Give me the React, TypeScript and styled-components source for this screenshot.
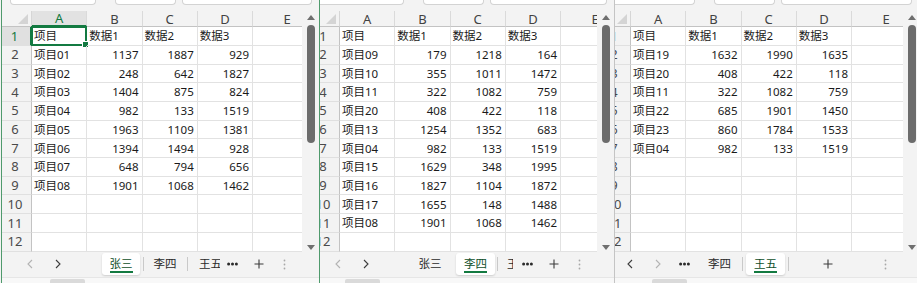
import React from 'react'
import styled, { createGlobalStyle } from 'styled-components'

const GREEN = '#137a41'

const GlobalStyle = createGlobalStyle`
  html, body {
    margin: 0;
    padding: 0;
    background: #f3f3f3;
    overflow: hidden;
  }
  body {
    font-family: "Noto Sans", "Noto Sans CJK SC", sans-serif;
    color: #1f1f1f;
  }
`

type Value = string | number
type RowData = Value[] | null
type TabItem = {
  kind: 'prev' | 'next' | 'tab' | 'sep' | 'more' | 'add' | 'menu'
  w: number
  ml?: number
  label?: string
  active?: boolean
  disabled?: boolean
  clip?: number
}

type SheetConf = {
  width: number
  viewport: number
  active?: boolean
  scroll: number
  lead: number
  firstBox: number
  trail: number
  tabPad: number
  hthumb: number
  rows: RowData[]
  tabs: TabItem[]
}

const COLS = ['A', 'B', 'C', 'D', 'E']
const COL_W = [55.25, 55.25, 55.25, 55.25, 69]
const HEAD: RowData = ['项目', '数据1', '数据2', '数据3']

const fill = (rows: RowData[]): RowData[] => {
  const out = [HEAD, ...rows]
  while (out.length < 12) out.push(null)
  return out
}

const sheets: SheetConf[] = [
  {
    width: 317,
    viewport: 300,
    active: true,
    scroll: 0,
    lead: 8,
    firstBox: 86,
    trail: 7,
    tabPad: 14,
    hthumb: 48,
    rows: fill([
      ['项目01', 1137, 1887, 929],
      ['项目02', 248, 642, 1827],
      ['项目03', 1404, 875, 824],
      ['项目04', 982, 133, 1519],
      ['项目05', 1963, 1109, 1381],
      ['项目06', 1394, 1494, 928],
      ['项目07', 648, 794, 656],
      ['项目08', 1901, 1068, 1462],
    ]),
    tabs: [
      { kind: 'prev', w: 28, disabled: true },
      { kind: 'next', w: 28 },
      { kind: 'tab', w: 38, ml: 30, label: '张三', active: true },
      { kind: 'sep', w: 6 },
      { kind: 'tab', w: 38, label: '李四' },
      { kind: 'sep', w: 7 },
      { kind: 'tab', w: 29, label: '王五', clip: 8 },
      { kind: 'more', w: 25 },
      { kind: 'add', w: 28 },
      { kind: 'menu', w: 22 },
    ],
  },
  {
    width: 294,
    viewport: 277,
    scroll: 10,
    lead: -10,
    firstBox: 94,
    trail: 7,
    tabPad: 4,
    hthumb: 25,
    rows: fill([
      ['项目09', 179, 1218, 164],
      ['项目10', 355, 1011, 1472],
      ['项目11', 322, 1082, 759],
      ['项目20', 408, 422, 118],
      ['项目13', 1254, 1352, 683],
      ['项目04', 982, 133, 1519],
      ['项目15', 1629, 348, 1995],
      ['项目16', 1827, 1104, 1872],
      ['项目17', 1655, 148, 1488],
      ['项目08', 1901, 1068, 1462],
    ]),
    tabs: [
      { kind: 'prev', w: 28, disabled: true },
      { kind: 'next', w: 28 },
      { kind: 'tab', w: 38, ml: 31, label: '张三' },
      { kind: 'tab', w: 39, ml: 7, label: '李四', active: true },
      { kind: 'sep', w: 4 },
      { kind: 'tab', w: 14, label: '王五', clip: 8 },
      { kind: 'more', w: 29 },
      { kind: 'add', w: 24 },
      { kind: 'menu', w: 26 },
    ],
  },
  {
    width: 305,
    viewport: 288,
    scroll: 14,
    lead: -10,
    firstBox: 90,
    trail: 8,
    tabPad: 1,
    hthumb: 37,
    rows: fill([
      ['项目19', 1632, 1990, 1635],
      ['项目20', 408, 422, 118],
      ['项目11', 322, 1082, 759],
      ['项目22', 685, 1901, 1450],
      ['项目23', 860, 1784, 1533],
      ['项目04', 982, 133, 1519],
    ]),
    tabs: [
      { kind: 'prev', w: 28 },
      { kind: 'next', w: 28, disabled: true },
      { kind: 'more', w: 24 },
      { kind: 'tab', w: 39, ml: 4, label: '李四' },
      { kind: 'sep', w: 7 },
      { kind: 'tab', w: 39, label: '王五', active: true },
      { kind: 'sep', w: 6 },
      { kind: 'add', w: 74 },
      { kind: 'menu', w: 40 },
    ],
  },
]

const Desk = styled.div`
  display: flex;
  width: 917px;
  height: 283px;
  overflow: hidden;
  background: #f3f3f3;
`

const Pane = styled.div<{ $w: number; $active?: boolean; $last?: boolean }>`
  flex: 0 0 auto;
  width: ${(p) => p.$w}px;
  height: 283px;
  display: flex;
  flex-direction: column;
  overflow: hidden;
  background: #f3f3f3;
  margin-left: ${(p) => (p.$active ? 1 : 0)}px;
  border-left: ${(p) => (p.$active ? '1px solid #4f9a6c' : 'none')};
  border-right: ${(p) =>
    p.$active ? '1px solid #4f9a6c' : p.$last ? 'none' : '1px solid #c4c4c4'};
`

const TopStrip = styled.div<{ $lead: number; $trail: number }>`
  height: 11px;
  flex: 0 0 11px;
  display: flex;
  align-items: flex-start;
  padding-left: ${(p) => Math.max(p.$lead, 0)}px;
  padding-right: ${(p) => p.$trail}px;
  margin-left: ${(p) => Math.min(p.$lead, 0)}px;
`

const FieldBox = styled.div<{ $w?: number; $grow?: boolean; $ml?: number }>`
  ${(p) => (p.$grow ? 'flex: 1 1 auto;' : `flex: 0 0 ${p.$w}px;`)}
  margin-left: ${(p) => p.$ml || 0}px;
  height: 5px;
  box-sizing: border-box;
  background: #fff;
  border: 1px solid #d3d3d3;
  border-top: none;
  border-radius: 0 0 4px 4px;
`

const GridArea = styled.div`
  display: flex;
  height: 240.7px;
  flex: 0 0 240.7px;
`

const Viewport = styled.div<{ $w: number }>`
  width: ${(p) => p.$w}px;
  flex: 0 0 ${(p) => p.$w}px;
  overflow: hidden;
  background: #fff;
`

const Sheet = styled.div<{ $scroll: number }>`
  width: 320px;
  margin-left: -${(p) => p.$scroll}px;
`

const HeaderRow = styled.div`
  display: flex;
  height: 16.3px;
  background: #f3f3f3;
`

const Corner = styled.div`
  width: 30px;
  flex: 0 0 30px;
  box-sizing: border-box;
  border-right: 1px solid #d6d6d6;
  border-bottom: 1px solid #c3c3c3;
  display: flex;
  justify-content: flex-end;
  align-items: flex-end;
  padding: 0 3px 2px 0;
`

const ColHead = styled.div<{ $w: number; $sel?: boolean }>`
  width: ${(p) => p.$w}px;
  flex: 0 0 ${(p) => p.$w}px;
  box-sizing: border-box;
  display: flex;
  align-items: center;
  justify-content: center;
  font-size: 13px;
  line-height: 14px;
  color: ${(p) => (p.$sel ? GREEN : '#424242')};
  background: ${(p) => (p.$sel ? '#e2e2e2' : 'transparent')};
  border-right: 1px solid #dadada;
  border-bottom: ${(p) => (p.$sel ? `2px solid ${GREEN}` : '1px solid #c3c3c3')};
`

const Row = styled.div`
  display: flex;
  height: 18.7px;
`

const RowHead = styled.div<{ $sel?: boolean }>`
  width: 30px;
  flex: 0 0 30px;
  box-sizing: border-box;
  display: flex;
  align-items: center;
  justify-content: center;
  padding-right: 3px;
  font-size: 13px;
  line-height: 1;
  color: ${(p) => (p.$sel ? GREEN : '#4a4a4a')};
  background: ${(p) => (p.$sel ? '#e0e0e0' : '#f3f3f3')};
  border-right: ${(p) => (p.$sel ? `2px solid ${GREEN}` : '1px solid #c3c3c3')};
  border-bottom: 1px solid #e0e0e0;
`

const Cell = styled.div<{ $w: number; $num?: boolean }>`
  position: relative;
  width: ${(p) => p.$w}px;
  flex: 0 0 ${(p) => p.$w}px;
  box-sizing: border-box;
  display: flex;
  align-items: center;
  justify-content: ${(p) => (p.$num ? 'flex-end' : 'flex-start')};
  padding: 0 3px 0 2px;
  font-size: 11.5px;
  line-height: 1;
  color: #1a1a1a;
  white-space: nowrap;
  border-right: 1px solid #e2e2e2;
  border-bottom: 1px solid #e2e2e2;
`

const Selection = styled.div`
  position: absolute;
  top: -1px;
  left: -1px;
  right: -1px;
  bottom: -1px;
  border: 2px solid ${GREEN};
  pointer-events: none;
`

const Handle = styled.div`
  position: absolute;
  right: -4px;
  bottom: -4px;
  width: 5px;
  height: 5px;
  background: ${GREEN};
  border: 1px solid #fff;
`

const VScroll = styled.div`
  width: 17px;
  flex: 0 0 17px;
  display: flex;
  flex-direction: column;
  align-items: center;
  background: #f3f3f3;
`

const ScrollArrow = styled.div<{ $top?: boolean }>`
  height: 5px;
  display: flex;
  margin-top: ${(p) => (p.$top ? '4px' : 'auto')};
  margin-bottom: ${(p) => (p.$top ? 0 : 2)}px;
`

const VThumb = styled.div`
  width: 8px;
  height: 118px;
  margin-top: 5px;
  border-radius: 4px;
  background: #6c6c6c;
`

const TabBar = styled.div<{ $pad: number }>`
  height: 25.6px;
  flex: 0 0 25.6px;
  display: flex;
  align-items: center;
  padding-left: ${(p) => p.$pad}px;
  background: #f3f3f3;
  box-sizing: border-box;
`

const NavBtn = styled.div<{ $w: number; $disabled?: boolean }>`
  width: ${(p) => p.$w}px;
  flex: 0 0 ${(p) => p.$w}px;
  display: flex;
  justify-content: center;
  align-items: center;
  color: ${(p) => (p.$disabled ? '#b3b3b3' : '#3c3c3c')};
`

const Slot = styled.div<{ $w: number }>`
  width: ${(p) => p.$w}px;
  flex: 0 0 ${(p) => p.$w}px;
  display: flex;
  justify-content: center;
  align-items: center;
`

const Sep = styled.div<{ $w: number }>`
  width: ${(p) => p.$w}px;
  flex: 0 0 ${(p) => p.$w}px;
  display: flex;
  justify-content: center;

  &::after {
    content: '';
    width: 1px;
    height: 14px;
    background: #c9c9c9;
  }
`

const Tab = styled.div<{ $w: number; $ml?: number; $active?: boolean; $clip?: number }>`
  width: ${(p) => p.$w}px;
  flex: 0 0 ${(p) => p.$w}px;
  margin-left: ${(p) => p.$ml || 0}px;
  height: 22px;
  box-sizing: border-box;
  display: flex;
  align-items: center;
  justify-content: ${(p) => (p.$clip ? 'flex-start' : 'center')};
  padding-left: ${(p) => p.$clip || 0}px;
  overflow: hidden;
  white-space: nowrap;
  border-radius: 3px;
  background: ${(p) => (p.$active ? '#fff' : 'transparent')};
  box-shadow: ${(p) => (p.$active ? '0 1px 2px rgba(0, 0, 0, 0.16)' : 'none')};
`

const TabLabel = styled.span<{ $active?: boolean }>`
  font-size: 11.5px;
  line-height: 14px;
  padding-top: 2px;
  color: ${(p) => (p.$active ? '#0f4f2a' : '#2a2a2a')};
  border-bottom: 2px solid ${(p) => (p.$active ? GREEN : 'transparent')};
`

const HScroll = styled.div`
  flex: 1 1 auto;
  box-sizing: border-box;
  border-top: 1px solid #e6e6e6;
  background: #f8f8f8;
  display: flex;
  align-items: flex-end;
`

const HThumb = styled.div<{ $left: number }>`
  width: 35px;
  height: 4px;
  margin-left: ${(p) => p.$left}px;
  background: #dadada;
  border-radius: 2px 2px 0 0;
`

const Chevron = ({ dir }: { dir: 'prev' | 'next' }) => (
  <svg width="6" height="10" viewBox="0 0 6 10">
    <polyline
      points={dir === 'prev' ? '5,1 1,5 5,9' : '1,1 5,5 1,9'}
      fill="none"
      stroke="currentColor"
      strokeWidth="1.1"
    />
  </svg>
)

const Dots = () => (
  <svg width="11" height="4" viewBox="0 0 11 4">
    <circle cx="1.6" cy="2" r="1.5" fill="#2b2b2b" />
    <circle cx="5.5" cy="2" r="1.5" fill="#2b2b2b" />
    <circle cx="9.4" cy="2" r="1.5" fill="#2b2b2b" />
  </svg>
)

const Plus = () => (
  <svg width="10" height="10" viewBox="0 0 10 10">
    <path d="M5 0.5V9.5M0.5 5H9.5" stroke="#3a3a3a" strokeWidth="1.1" />
  </svg>
)

const Kebab = () => (
  <svg width="3" height="11" viewBox="0 0 3 11">
    <circle cx="1.5" cy="1.5" r="0.9" fill="#a8a8a8" />
    <circle cx="1.5" cy="5.5" r="0.9" fill="#a8a8a8" />
    <circle cx="1.5" cy="9.5" r="0.9" fill="#a8a8a8" />
  </svg>
)

const Arrow = ({ up }: { up?: boolean }) => (
  <svg width="8" height="5" viewBox="0 0 8 5">
    <polygon points={up ? '0,5 4,0 8,5' : '0,0 4,5 8,0'} fill="#6f6f6f" />
  </svg>
)

const SelectAll = () => (
  <svg width="10" height="10" viewBox="0 0 10 10">
    <polygon points="10,0 10,10 0,10" fill="#d4d4d4" />
  </svg>
)

const SheetTabs: React.FC<{ items: TabItem[]; pad: number }> = ({ items, pad }) => (
  <TabBar $pad={pad}>
    {items.map((t, i) => {
      switch (t.kind) {
        case 'prev':
        case 'next':
          return (
            <NavBtn key={i} $w={t.w} $disabled={t.disabled}>
              <Chevron dir={t.kind} />
            </NavBtn>
          )
        case 'sep':
          return <Sep key={i} $w={t.w} />
        case 'more':
          return (
            <Slot key={i} $w={t.w}>
              <Dots />
            </Slot>
          )
        case 'add':
          return (
            <Slot key={i} $w={t.w}>
              <Plus />
            </Slot>
          )
        case 'menu':
          return (
            <Slot key={i} $w={t.w}>
              <Kebab />
            </Slot>
          )
        default:
          return (
            <Tab key={i} $w={t.w} $ml={t.ml} $active={t.active} $clip={t.clip}>
              <TabLabel $active={t.active}>{t.label}</TabLabel>
            </Tab>
          )
      }
    })}
  </TabBar>
)

const Window: React.FC<{ s: SheetConf; last?: boolean }> = ({ s, last }) => (
  <Pane $w={s.width} $active={s.active} $last={last}>
    <TopStrip $lead={s.lead} $trail={s.trail}>
      <FieldBox $w={s.firstBox} />
      <FieldBox $w={61} $ml={19} />
      <FieldBox $grow $ml={6} />
    </TopStrip>

    <GridArea>
      <Viewport $w={s.viewport}>
        <Sheet $scroll={s.scroll}>
          <HeaderRow>
            <Corner>
              <SelectAll />
            </Corner>
            {COLS.map((c, ci) => (
              <ColHead key={c} $w={COL_W[ci]} $sel={s.active && ci === 0}>
                {c}
              </ColHead>
            ))}
          </HeaderRow>

          {s.rows.map((row, ri) => (
            <Row key={ri}>
              <RowHead $sel={s.active && ri === 0}>{ri + 1}</RowHead>
              {COL_W.map((w, ci) => {
                const v = row ? row[ci] : undefined
                return (
                  <Cell key={ci} $w={w} $num={typeof v === 'number'}>
                    {v}
                    {s.active && ri === 0 && ci === 0 && (
                      <Selection>
                        <Handle />
                      </Selection>
                    )}
                  </Cell>
                )
              })}
            </Row>
          ))}
        </Sheet>
      </Viewport>

      <VScroll>
        <ScrollArrow $top>
          <Arrow up />
        </ScrollArrow>
        <VThumb />
        <ScrollArrow>
          <Arrow />
        </ScrollArrow>
      </VScroll>
    </GridArea>

    <SheetTabs items={s.tabs} pad={s.tabPad} />

    <HScroll>
      <HThumb $left={s.hthumb} />
    </HScroll>
  </Pane>
)

const App = () => (
  <>
    <GlobalStyle />
    <Desk>
      {sheets.map((s, i) => (
        <Window key={i} s={s} last={i === sheets.length - 1} />
      ))}
    </Desk>
  </>
)

export default App
